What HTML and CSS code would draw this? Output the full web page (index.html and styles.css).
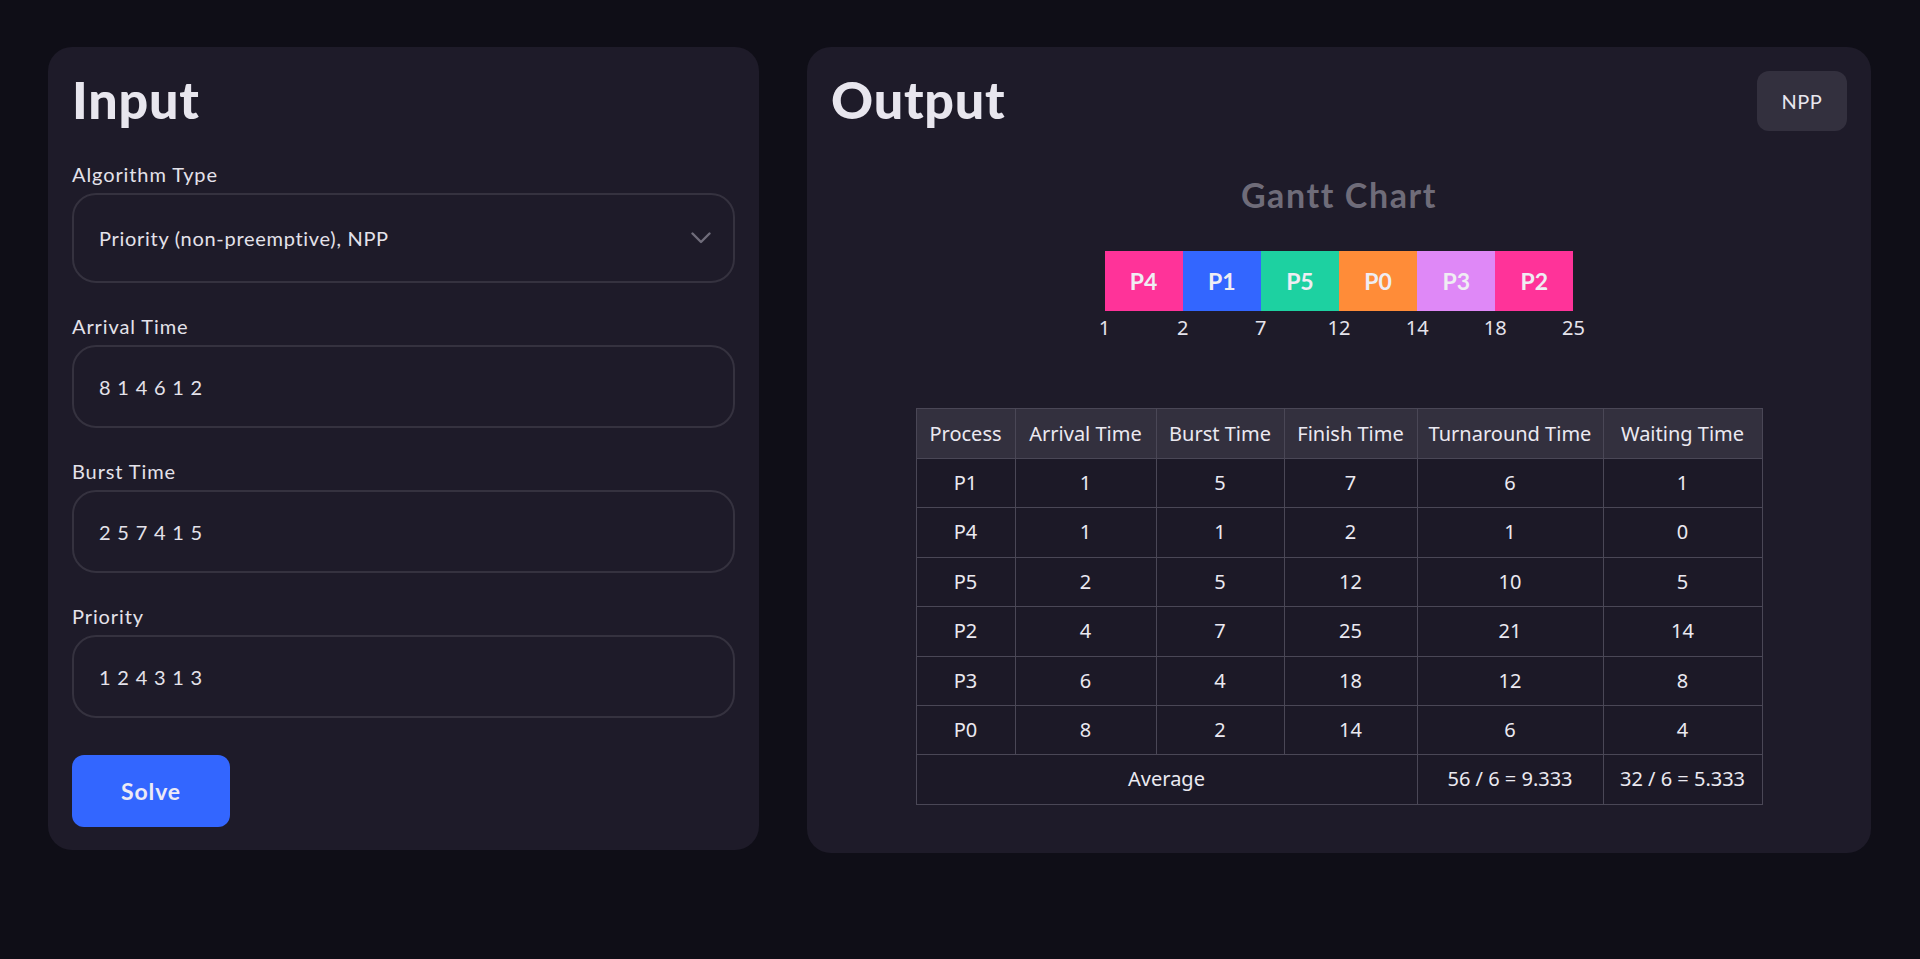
FILE: index.html
```html
<!DOCTYPE html>
<html lang="en">
<head>
<meta charset="utf-8">
<title>CPU Scheduling Solver</title>
<link rel="stylesheet" href="styles.css">
</head>
<body>
<main class="layout">
  <section class="card input-card">
    <h1 class="card-title">Input</h1>
    <div class="field field-first">
      <label class="field-label">Algorithm Type</label>
      <div class="select-box">
        <span>Priority (non-preemptive), NPP</span>
        <svg class="chevron" width="20" height="12" viewBox="0 0 20 12"><polyline points="1.5,1.5 10,10 18.5,1.5" fill="none" stroke="#6f6c7a" stroke-width="2.4" stroke-linecap="round" stroke-linejoin="round"/></svg>
      </div>
    </div>
    <div class="field">
      <label class="field-label">Arrival Time</label>
      <input class="text-input" type="text" value="8 1 4 6 1 2">
    </div>
    <div class="field">
      <label class="field-label">Burst Time</label>
      <input class="text-input" type="text" value="2 5 7 4 1 5">
    </div>
    <div class="field">
      <label class="field-label">Priority</label>
      <input class="text-input" type="text" value="1 2 4 3 1 3">
    </div>
    <button class="solve-btn">Solve</button>
  </section>

  <section class="card output-card">
    <div class="output-header">
      <h1 class="card-title">Output</h1>
      <button class="algo-badge">NPP</button>
    </div>
    <div class="gantt">
      <h2 class="gantt-title">Gantt Chart</h2>
      <div class="gantt-bars">
        <div class="bar bar-pink">P4</div>
        <div class="bar bar-blue">P1</div>
        <div class="bar bar-teal">P5</div>
        <div class="bar bar-orange">P0</div>
        <div class="bar bar-violet">P3</div>
        <div class="bar bar-pink">P2</div>
      </div>
      <div class="gantt-ticks">
        <span class="tick"><span>1</span></span>
        <span class="tick"><span>2</span></span>
        <span class="tick"><span>7</span></span>
        <span class="tick"><span>12</span></span>
        <span class="tick"><span>14</span></span>
        <span class="tick"><span>18</span></span>
        <span class="tick"><span>25</span></span>
      </div>
    </div>
    <table class="result-table">
      <colgroup>
        <col class="c-process"><col class="c-arrival"><col class="c-burst"><col class="c-finish"><col class="c-turn"><col class="c-wait">
      </colgroup>
      <thead>
        <tr><th>Process</th><th>Arrival Time</th><th>Burst Time</th><th>Finish Time</th><th>Turnaround Time</th><th>Waiting Time</th></tr>
      </thead>
      <tbody>
        <tr><td>P1</td><td>1</td><td>5</td><td>7</td><td>6</td><td>1</td></tr>
        <tr><td>P4</td><td>1</td><td>1</td><td>2</td><td>1</td><td>0</td></tr>
        <tr><td>P5</td><td>2</td><td>5</td><td>12</td><td>10</td><td>5</td></tr>
        <tr><td>P2</td><td>4</td><td>7</td><td>25</td><td>21</td><td>14</td></tr>
        <tr><td>P3</td><td>6</td><td>4</td><td>18</td><td>12</td><td>8</td></tr>
        <tr><td>P0</td><td>8</td><td>2</td><td>14</td><td>6</td><td>4</td></tr>
        <tr><td colspan="4">Average</td><td>56 / 6 = 9.333</td><td>32 / 6 = 5.333</td></tr>
      </tbody>
    </table>
  </section>
</main>
</body>
</html>
```

FILE: styles.css
```css
html, body {
  margin: 0;
  background: #0f0e17;
}

body {
  font-family: Lato, "Noto Sans", sans-serif;
  color: #e6e4ec;
}

.layout {
  display: grid;
  grid-template-columns: 711px 1fr;
  gap: 48px;
  padding: 47px 49px 0 48px;
  align-items: start;
}

.card {
  background: #1e1b29;
  border-radius: 24px;
  padding: 24px;
}

.input-card {
  padding-bottom: 23px;
}

.card-title {
  margin: 0;
  font-family: Lato, sans-serif;
  font-size: 52px;
  font-weight: 900;
  line-height: 57px;
  letter-spacing: 0.8px;
  color: #e8e6ee;
}

.field {
  display: flex;
  flex-direction: column;
  margin-top: 29px;
}

.field-first {
  margin-top: 32px;
}

.field-label {
  font-size: 20px;
  line-height: 28px;
  margin-bottom: 5px;
  letter-spacing: 0.9px;
  color: #e4e2ea;
}

.select-box {
  height: 90px;
  box-sizing: border-box;
  border: 2px solid #35323f;
  border-radius: 24px;
  display: flex;
  align-items: center;
  justify-content: space-between;
  padding: 0 22px 0 25px;
  font-size: 20px;
  letter-spacing: 0.7px;
  color: #e4e2ea;
}

.chevron {
  display: block;
}

.text-input {
  display: block;
  width: 100%;
  height: 83px;
  box-sizing: border-box;
  border: 2px solid #35323f;
  border-radius: 24px;
  background: transparent;
  color: #e4e2ea;
  font-family: Lato, sans-serif;
  font-size: 20px;
  letter-spacing: 0.8px;
  padding: 0 25px;
  outline: none;
}

.solve-btn {
  display: block;
  margin-top: 37px;
  width: 158px;
  height: 72px;
  border: none;
  border-radius: 12px;
  background: #3366ff;
  color: #eceaf5;
  font-family: Lato, sans-serif;
  font-size: 23px;
  font-weight: 700;
  letter-spacing: 0.9px;
}

.output-header {
  display: flex;
  justify-content: space-between;
  align-items: flex-start;
}

.algo-badge {
  width: 90px;
  height: 60px;
  border: none;
  border-radius: 12px;
  background: #33303e;
  color: #e8e6ee;
  font-family: Lato, sans-serif;
  font-size: 20px;
  letter-spacing: 0.5px;
}

.gantt {
  display: flex;
  flex-direction: column;
  align-items: center;
}

.gantt-title {
  margin: 43px 0 0;
  font-size: 34px;
  font-weight: 700;
  line-height: 41px;
  color: #6f6c79;
  letter-spacing: 1.6px;
}

.gantt-bars {
  display: flex;
  margin-top: 36px;
}

.bar {
  width: 78.17px;
  height: 60px;
  display: flex;
  align-items: center;
  justify-content: center;
  font-weight: 700;
  font-size: 23px;
  color: #efedf3;
}

.bar-pink { background: #ff3399; }
.bar-blue { background: #3366ff; }
.bar-teal { background: #1dd1a1; }
.bar-orange { background: #ff8c38; }
.bar-violet { background: #df88f7; }

.gantt-ticks {
  display: flex;
  justify-content: space-between;
  width: 469px;
  margin-top: 3px;
  font-family: "Noto Sans", sans-serif;
  font-size: 20px;
  line-height: 28px;
  color: #e6e4ec;
}

.tick {
  width: 0;
  display: flex;
  justify-content: center;
  white-space: nowrap;
}

.result-table {
  margin: 66px auto 24px;
  border-collapse: collapse;
  table-layout: fixed;
  width: 846px;
  font-family: "Noto Sans", sans-serif;
  font-size: 20px;
  color: #ebe9f1;
}

.c-process { width: 99px; }
.c-arrival { width: 141px; }
.c-burst { width: 128px; }
.c-finish { width: 133px; }
.c-turn { width: 186px; }
.c-wait { width: 159px; }

.result-table th,
.result-table td {
  border: 1px solid #4a4756;
  text-align: center;
  font-weight: 400;
  white-space: nowrap;
}

.result-table th {
  background: #33303e;
  padding: 11px 0 10px;
  line-height: 28px;
  color: #ebe9f1;
}

.result-table td {
  background: #1c1927;
  padding: 10px 0;
  line-height: 28.4px;
}
```
